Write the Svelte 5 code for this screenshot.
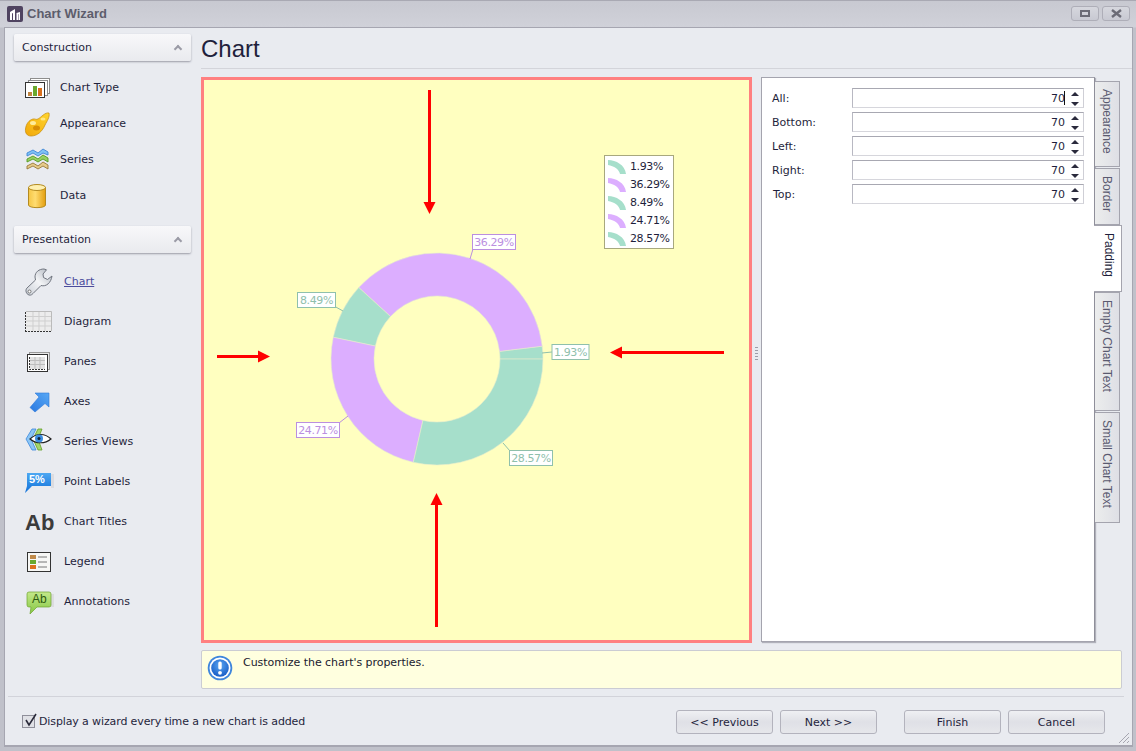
<script>
  const cx = 234, cy = 279, R = 106, r = 63;
  const teal = '#a6dfcb', purple = '#dcaeff';
  const values = [1.93, 36.29, 8.49, 24.71, 28.57];
  const pt = (rad, a) => [cx + rad * Math.cos(a), cy - rad * Math.sin(a)];
  let acc = 0;
  const slices = values.map((v, i) => {
    const a0 = (acc / 100) * 2 * Math.PI;
    acc += v;
    const a1 = (acc / 100) * 2 * Math.PI;
    const [x0, y0] = pt(R, a0), [x1, y1] = pt(R, a1), [x2, y2] = pt(r, a1), [x3, y3] = pt(r, a0);
    const large = a1 - a0 > Math.PI ? 1 : 0;
    return {
      d: `M${x0} ${y0}A${R} ${R} 0 ${large} 0 ${x1} ${y1}L${x2} ${y2}A${r} ${r} 0 ${large} 1 ${x3} ${y3}Z`,
      fill: i % 2 ? purple : teal
    };
  });
  const labels = [
    { t: '1.93%', x: 349, y: 264.5, w: 37, c: '#8fc0ac', l: [339, 273, 349, 272] },
    { t: '36.29%', x: 269.5, y: 154.5, w: 43, c: '#bb8fdf', l: [267, 179, 270, 169] },
    { t: '8.49%', x: 94.5, y: 212.5, w: 38, c: '#8fc0ac', l: [140, 231, 131, 226] },
    { t: '24.71%', x: 93.5, y: 342.5, w: 43, c: '#bb8fdf', l: [145, 336, 136, 343] },
    { t: '28.57%', x: 306.5, y: 370.5, w: 43, c: '#8fc0ac', l: [300, 363, 307, 371] }
  ];
  const legend = [
    ['1.93%', teal], ['36.29%', purple], ['8.49%', teal], ['24.71%', purple], ['28.57%', teal]
  ];
  const construction = [['Chart Type', 'type'], ['Appearance', 'palette'], ['Series', 'series'], ['Data', 'data']];
  const presentation = [
    ['Chart', 'wrench'], ['Diagram', 'diagram'], ['Panes', 'panes'], ['Axes', 'axes'], ['Series Views', 'views'],
    ['Point Labels', 'point'], ['Chart Titles', 'ab'], ['Legend', 'legend'], ['Annotations', 'annot']
  ];
  const props = ['All:', 'Bottom:', 'Left:', 'Right:', 'Top:'];
  const tabs = [
    { t: 'Appearance', h: 86 }, { t: 'Border', h: 57 }, { t: 'Padding', h: 67, active: true },
    { t: 'Empty Chart Text', h: 119 }, { t: 'Small Chart Text', h: 111 }
  ];
</script>

{#snippet icon(n)}
  <svg class="ico" width="32" height="32" viewBox="0 0 32 32" aria-hidden="true">
    {#if n === 'type'}
      <rect x="6.5" y="6.5" width="19" height="15" fill="#fff" stroke="#8d8d8d"/>
      <rect x="4.5" y="8.5" width="19" height="15" fill="#fff" stroke="#8d8d8d"/>
      <rect x="1.5" y="10.5" width="19" height="15" fill="#fff" stroke="#333"/>
      <rect x="4" y="20" width="4" height="4" fill="#c08440"/>
      <rect x="9" y="14" width="4" height="10" fill="#6aa92e"/>
      <rect x="14" y="16" width="4" height="8" fill="#d9701e"/>
    {:else if n === 'palette'}
      <path d="M25 5C26 9 23 13 21 17C18 24 13 28 7 28C3 28 1 25 1.500 21C2 16 5 12 9 11C11 10.500 12 12 14 11C17 9.500 21 4 25 5Z" fill="url(#gold)" stroke="#c58a06" stroke-width=".7"/>
      <ellipse cx="9" cy="15" rx="3" ry="2" fill="#ffec9a"/>
      <ellipse cx="12.500" cy="20" rx="3.500" ry="2.500" fill="#d88d04"/>
      <ellipse cx="19" cy="11" rx="2.500" ry="1.500" fill="#ffe680"/>
    {:else if n === 'series'}
      <path d="M3 9L9 6L14 9L19 5L24 8V11L19 9L14 12L9 9L3 12Z" fill="#7fc2f5" stroke="#3f86d6" stroke-width=".9"/>
      <path d="M3 15L9 12L14 15L19 11L24 14V18L19 15L14 18L9 15L3 18Z" fill="#96d062" stroke="#559a22" stroke-width=".9"/>
      <path d="M3 22L9 19L14 22L19 18L24 21V25L19 22L14 25L9 22L3 25Z" fill="#e6cb8a" stroke="#977838" stroke-width=".9"/>
    {:else if n === 'data'}
      <path d="M4.500 7.500V25C4.500 28.500 21.500 28.500 21.500 25V7.500Z" fill="url(#goldH)" stroke="#b48a20"/>
      <ellipse cx="13" cy="7.500" rx="8.500" ry="3" fill="#fff0b0" stroke="#b48a20"/>
    {:else if n === 'wrench'}
      <path d="M20 3C15 3 11 6 11 11L11.500 14L3 22C1 24 2 28 5 29C7 29.500 8 28.500 9 27.500L17 19.500C22 21 27 17 28 10L23.500 13.500L19.500 11.500L19 8L22.500 3.800Z" fill="url(#steel)" stroke="#70757f" stroke-linejoin="round"/>
      <circle cx="5.500" cy="25.500" r="1.500" fill="#fff" stroke="#777"/>
    {:else if n === 'diagram'}
      <rect x="2" y="6" width="25" height="19" fill="#ececec"/>
      <path d="M2 10.500H27M2 15H27M2 20H27M9 6V25M15 6V25M21 6V25" stroke="#cfcfcf"/>
      <path d="M1.500 6V26M1 25.500H28" stroke="#333" stroke-dasharray="2 1"/>
      <path d="M2 5.500H27.500V25" fill="none" stroke="#bbb"/>
    {:else if n === 'panes'}
      <rect x="5.500" y="6.500" width="20" height="17" fill="#e8e8e8" stroke="#999"/>
      <rect x="3.500" y="8.500" width="20" height="17" fill="#fff" stroke="#333"/>
      <rect x="6" y="11" width="15" height="12" fill="#e2e2e2"/>
      <path d="M6 14.500H21M6 18.500H21M11 11V23M16 11V23" stroke="#bdbdbd"/>
      <path d="M5.500 11V23.500H21" fill="none" stroke="#333" stroke-dasharray="2 1"/>
    {:else if n === 'axes'}
      <path d="M11 7H25V21L21 17.500L11 26L6 21.500L15 11Z" fill="url(#blue)" stroke="#2f78d8" stroke-width=".6"/>
    {:else if n === 'views'}
      <path d="M8 3L2 13L8 24H12L7 13L12 3Z" fill="#8cc6f5" stroke="#3a86dd" stroke-width=".8"/>
      <path d="M14 3L9 13L14 24H18L14 13L18 3Z" fill="#a5d66e" stroke="#5f9f25" stroke-width=".8"/>
      <path d="M6 13C12 7 21 7 27 13C21 18 12 18 6 13Z" fill="#fff" stroke="#222" stroke-width="1.200"/>
      <circle cx="15" cy="12.500" r="4" fill="#3b8de0"/>
      <circle cx="15" cy="12.500" r="1.500" fill="#123"/>
    {:else if n === 'point'}
      <path d="M27 8H30V22H27Z" fill="#dcdce0"/>
      <path d="M3 7H27V20H8L1 27L3 20Z" fill="url(#blue2)"/>
      <text x="5" y="16.500" class="bubble">5%</text>
    {:else if n === 'ab'}
      <text x="1" y="24" class="ab">Ab</text>
    {:else if n === 'legend'}
      <rect x="3.500" y="6.500" width="23" height="19" fill="#f7f7f5" stroke="#333"/>
      <rect x="6" y="9" width="6" height="4" fill="#c08a4a"/>
      <rect x="6" y="14" width="6" height="4" fill="#6aa92e"/>
      <rect x="6" y="19" width="6" height="4" fill="#dd701e"/>
      <path d="M14 11H23M14 16H23M14 21H23" stroke="#777"/>
    {:else if n === 'annot'}
      <path d="M27 8H30V21H27Z" fill="#dcdce0"/>
      <path d="M5 6H25Q27 6 27 8V19Q27 21 25 21H13L6 28L7 21H5Q3 21 3 19V8Q3 6 5 6Z" fill="url(#green)" stroke="#6fa52f" stroke-width=".7"/>
      <text x="8" y="17" class="bubble dark">Ab</text>
    {/if}
  </svg>
{/snippet}

<svg class="defs" width="0" height="0" aria-hidden="true">
  <defs>
    <linearGradient id="gold" x1="0" y1="1" x2="1" y2="0"><stop offset="0" stop-color="#f2a80a"/><stop offset="1" stop-color="#ffd52e"/></linearGradient>
    <linearGradient id="goldH" x1="0" y1="0" x2="1" y2="0"><stop offset="0" stop-color="#f5c645"/><stop offset=".4" stop-color="#ffdc70"/><stop offset="1" stop-color="#e39e10"/></linearGradient>
    <linearGradient id="steel" x1="0" y1="1" x2="1" y2="0"><stop offset="0" stop-color="#c9ced6"/><stop offset=".5" stop-color="#f4f5f7"/><stop offset="1" stop-color="#aab0ba"/></linearGradient>
    <linearGradient id="blue" x1="0" y1="1" x2="1" y2="0"><stop offset="0" stop-color="#2a78e0"/><stop offset="1" stop-color="#58a8f5"/></linearGradient>
    <linearGradient id="blue2" x1="0" y1="0" x2="0" y2="1"><stop offset="0" stop-color="#4ea8f2"/><stop offset="1" stop-color="#0f6fd8"/></linearGradient>
    <linearGradient id="green" x1="0" y1="0" x2="0" y2="1"><stop offset="0" stop-color="#c4e88a"/><stop offset="1" stop-color="#86c744"/></linearGradient>
    <radialGradient id="info" cx=".5" cy=".35" r=".7"><stop offset="0" stop-color="#5aa6f2"/><stop offset="1" stop-color="#1257c2"/></radialGradient>
  </defs>
</svg>

<div class="window">
  <header class="titlebar">
    <svg class="app-ico" width="16" height="16" viewBox="0 0 16 16" aria-hidden="true">
      <rect width="16" height="16" rx="2" fill="#4f4360"/>
      <path d="M3 14V6L8 3V14H6V7L5 7.500V14ZM9.500 14V7L13 6V14H11.500V8L11 8.200V14Z" fill="#fff"/>
    </svg>
    <span class="title">Chart Wizard</span>
    <div class="winbtns">
      <span class="winbtn"><i class="restore"></i></span>
      <span class="winbtn">
        <svg width="11" height="9" viewBox="0 0 11 9" aria-hidden="true"><path d="M1 1L10 8M10 1L1 8" stroke="#6b6b76" stroke-width="2.400"/></svg>
      </span>
    </div>
  </header>

  <div class="frame">
    <div class="main">
      <nav class="nav">
        <div class="group-head"><span>Construction</span><i class="chev"></i></div>
        <ul class="items first">
          {#each construction as [label, n]}
            <li class="item tight">{@render icon(n)}<span>{label}</span></li>
          {/each}
        </ul>
        <div class="group-head"><span>Presentation</span><i class="chev"></i></div>
        <ul class="items">
          {#each presentation as [label, n], i}
            <li class="item wide">{@render icon(n)}<span class:link={i === 0}>{label}</span></li>
          {/each}
        </ul>
      </nav>

      <section class="content">
        <h1>Chart</h1>
        <div class="workspace">
          <div class="chart">
            <svg class="plot" width="545" height="560" viewBox="1 0 545 560" aria-label="Doughnut chart">
              {#each slices as s}
                <path d={s.d} fill={s.fill} stroke="#e6eccd" stroke-width=".6"/>
              {/each}
              {#each labels as l}
                <line x1={l.l[0]} y1={l.l[1]} x2={l.l[2]} y2={l.l[3]} stroke={l.c}/>
                <rect x={l.x} y={l.y} width={l.w} height="15" fill="#fff" stroke={l.c}/>
                <text x={l.x + l.w / 2} y={l.y + 11.500} text-anchor="middle" fill={l.c} class="lbl">{l.t}</text>
              {/each}
              <g stroke="#f00" stroke-width="3" fill="#f00">
                <line x1="226.500" y1="10" x2="226.500" y2="124"/>
                <path d="M220.500 122H232.500L226.500 134Z" stroke="none"/>
                <line x1="14" y1="276.500" x2="55" y2="276.500"/>
                <path d="M55 270.500V282.500L67 276.500Z" stroke="none"/>
                <line x1="521" y1="272.500" x2="418" y2="272.500"/>
                <path d="M419 266.500V278.500L407 272.500Z" stroke="none"/>
                <line x1="233.500" y1="547" x2="233.500" y2="424"/>
                <path d="M227.500 425H239.500L233.500 413Z" stroke="none"/>
              </g>
            </svg>
            <div class="legend">
              {#each legend as [t, c]}
                <div class="legend-row">
                  <svg width="18" height="18" viewBox="0 0 18 18" aria-hidden="true">
                    <path d="M0 2C8 2 17 7 18 16H12C11 11 6 8 0 7Z" fill={c}/>
                  </svg>
                  <span>{t}</span>
                </div>
              {/each}
            </div>
          </div>

          <div class="splitter"><i></i><i></i><i></i><i></i><i></i></div>

          <div class="props">
            {#each props as p, i}
              <div class="prop">
                <label for={'p' + i} class:top={p === 'Top:'}>{p}</label>
                <div class="spin">
                  <input id={'p' + i} value="70" readonly />
                  {#if i === 0}<i class="caret"></i>{/if}
                  <div class="arrows"><i class="up"></i><i class="down"></i></div>
                </div>
              </div>
            {/each}
          </div>

          <div class="tabs">
            {#each tabs as t}
              <div class="tab" class:active={t.active} style:height="{t.h}px"><span>{t.t}</span></div>
            {/each}
          </div>
        </div>

        <div class="info">
          <svg width="26" height="26" viewBox="0 0 26 26" aria-hidden="true">
            <circle cx="13" cy="13" r="12.300" fill="#3f86dc"/>
            <circle cx="13" cy="13" r="10.500" fill="#fff"/>
            <circle cx="13" cy="13" r="8.800" fill="url(#info)"/>
            <rect x="11.300" y="6.500" width="3.400" height="8" rx="1.500" fill="#fff"/>
            <circle cx="13" cy="17.800" r="1.900" fill="#fff"/>
          </svg>
          <p>Customize the chart's properties.</p>
        </div>
      </section>
    </div>

    <footer class="footer">
      <label class="check">
        <span class="box">
          <svg width="15" height="15" viewBox="0 0 15 15" aria-hidden="true"><path d="M3 7L6 12L13 1" fill="none" stroke="#2a2a3a" stroke-width="1.600"/></svg>
        </span>
        Display a wizard every time a new chart is added
      </label>
      <div class="buttons">
        <button>&lt;&lt; Previous</button>
        <button>Next &gt;&gt;</button>
        <button class="gap">Finish</button>
        <button>Cancel</button>
      </div>
      <svg class="grip" width="12" height="12" viewBox="0 0 12 12" aria-hidden="true"><path d="M1 11L11 1M5 11L11 5M9 11L11 9" stroke="#a6a6b0"/></svg>
    </footer>
  </div>
</div>

<style>
  :global(body) { margin: 0; background: #c5c6cf; }
  * { box-sizing: border-box; }
  .defs { position: absolute; }
  .window {
    width: 1136px; height: 751px; display: flex; flex-direction: column; overflow: hidden;
    background: linear-gradient(#c8c9d1, #d0d1d9 26px, #c0c1ca 27px);
    font: 11px "DejaVu Sans", sans-serif; color: #1f1f3c;
    border-top: 1px solid #a9a9b3;
  }
  .titlebar { height: 26px; flex: none; display: flex; align-items: center; padding: 0 6px 0 7px; }
  .app-ico { margin-top: -1px; }
  .title { margin: -1px 0 0 4px; font: bold 13px "Liberation Sans", sans-serif; color: #5d5d6c; }
  .winbtns { margin-left: auto; display: flex; gap: 3px; margin-top: -1px; }
  .winbtn {
    width: 28px; height: 15px; border: 1px solid #aeaeb8; border-radius: 3px;
    background: linear-gradient(#d6d7de, #c8c9d2); display: flex; align-items: center; justify-content: center;
  }
  .restore { width: 10px; height: 7px; border: 2px solid #6b6b76; display: block; }

  .frame {
    flex: 1; min-height: 0; margin: 0 3px 4px 4px; display: flex; flex-direction: column;
    background: #e9ebf0; border: 1px solid #a6a6b1; border-width: 1px 1px 2px;
  }
  .main { display: flex; flex: none; height: 668px; }
  .nav { width: 186px; padding: 6px 0 0 9px; flex: none; }
  .group-head {
    width: 177px; height: 27px; padding: 0 8px 1px; display: flex; align-items: center; justify-content: space-between;
    border-radius: 2px; background: linear-gradient(#f8f8fa, #e9eaee);
    box-shadow: 0 1px 2px rgba(90, 90, 105, .55); font-size: 11px;
  }
  .chev {
    width: 6px; height: 6px; margin: 3px 2px 0 0; transform: rotate(45deg);
    border-left: 2px solid #9b9ba6; border-top: 2px solid #9b9ba6; display: block;
  }
  .items { list-style: none; margin: 9px 0 0; padding: 0; }
  .items.first { margin-bottom: 12px; }
  .item { display: flex; align-items: center; padding-left: 10px; }
  .item span { margin-top: -2px; }
  .item.tight { height: 36px; gap: 4px; }
  .item.wide { height: 40px; gap: 8px; }
  .ico { flex: none; }
  .link { color: #4b4b9c; text-decoration: underline; }
  .bubble { font: bold 11px "Liberation Sans", sans-serif; fill: #fff; }
  .bubble.dark { fill: #2d5a10; font-weight: normal; font-size: 12px; }
  .ab { font: bold 22px "Liberation Sans", sans-serif; fill: #3b3b3b; }

  .content { flex: 1; min-width: 0; padding-left: 10px; }
  h1 {
    margin: 0; height: 41px; padding-top: 5px; font: 24px/32px "Liberation Sans", sans-serif; color: #1f1f3c;
    border-bottom: 1px solid #d3d4da;
  }
  .workspace { display: flex; margin-top: 8px; height: 566px; align-items: flex-start; }
  .chart { width: 551px; height: 566px; border: 3px solid #ff8080; background: #ffffc0; position: relative; flex: none; }
  .plot { display: block; }
  .lbl { font: 11px "DejaVu Sans", sans-serif; letter-spacing: -.4px; }
  .legend {
    position: absolute; left: 400px; top: 75px; width: 70px; height: 94px; background: #fff;
    border: 1px solid #a8a87e; padding: 1px 0 0 3px; color: #1f1f3c; letter-spacing: -.4px;
  }
  .legend-row { height: 18px; display: flex; align-items: center; gap: 4px; }
  .legend-row svg { flex: none; margin-top: 1px; }

  .splitter { width: 9px; height: 566px; flex: none; display: flex; flex-direction: column; align-items: center; justify-content: center; gap: 2px; margin-top: -7px; }
  .splitter i { width: 3px; height: 1px; background: #9c9ca8; display: block; }

  .props {
    width: 334px; height: 565px; flex: none; background: #fff; border: 1px solid #a4a4ae; border-right-color: #8f8f9a;
    box-shadow: 1px 1px 1px rgba(90, 90, 105, .4); padding: 10px 10px 0;
  }
  .prop { display: flex; align-items: center; height: 20px; margin-bottom: 4px; }
  .prop label { width: 80px; flex: none; }
  .prop label.top { padding-left: 1px; }
  .spin {
    flex: 1; height: 20px; position: relative; display: flex; align-items: center;
    border: 1px solid; border-color: #a8a8b2 #cfcfd6 #d6d6dc #b8b8c2;
  }
  .spin input {
    width: 212px; height: 18px; border: 0; outline: 0; padding: 0; text-align: right; background: transparent;
    font: 11px "DejaVu Sans", sans-serif; color: #1f1f3c;
  }
  .caret { position: absolute; left: 211px; top: 2px; width: 1px; height: 14px; background: #111; }
  .arrows { position: absolute; right: 2px; top: 3px; width: 13px; height: 14px; display: flex; flex-direction: column; align-items: center; justify-content: space-between; }
  .arrows i { width: 0; height: 0; border-left: 4px solid transparent; border-right: 4px solid transparent; display: block; }
  .arrows .up { border-bottom: 4px solid #2a2a3c; }
  .arrows .down { border-top: 4px solid #2a2a3c; }

  .tabs { flex: none; margin-top: 4px; width: 28px; display: flex; flex-direction: column; gap: 1px; }
  .tab {
    width: 25px; background: linear-gradient(90deg, #eceded, #dedfe5); border: 1px solid #a4a4ae; border-left: 0;
    display: flex; justify-content: center; padding-top: 7px; color: #5a5a70;
    font: 12px "Liberation Sans", sans-serif;
  }
  .tab.active { width: 28px; background: #fff; color: #1f1f3c; margin: -1px 0 -1px -1px; position: relative; padding-left: 3px; }
  .tab span { writing-mode: vertical-rl; white-space: nowrap; }

  .info {
    margin-top: 7px; height: 39px; width: 921px; background: #ffffdf; border: 1px solid #cbccd3; border-radius: 2px;
    display: flex; align-items: flex-start; padding: 4px 0 0 5px; gap: 10px;
  }
  .info p { margin: 1px 0 0 0; color: #1a1a2e; letter-spacing: -.05px; }

  .footer { flex: 1; margin: 0 8px 0 3px; border-top: 1px solid #d2d3da; position: relative; display: flex; justify-content: space-between; padding: 13px 19px 0 14px; }
  .check { display: flex; align-items: center; height: 24px; gap: 4px; margin-top: -1px; letter-spacing: -.12px; }
  .box { width: 13px; height: 13px; border: 1px solid #8f8f9a; background: #e0e1e6; position: relative; display: block; flex: none; margin-top: 1px; }
  .box svg { position: absolute; left: 0; top: -3px; }
  .buttons { display: flex; gap: 7px; }
  button {
    width: 97px; height: 24px; border: 1px solid #b3b3bd; border-radius: 3px; padding: 0;
    background: linear-gradient(#eff0f3, #dfe0e6 50%, #e6e7eb); font: 11px "DejaVu Sans", sans-serif; color: #1f1f3c;
  }
  button.gap { margin-left: 20px; }
  .grip { position: absolute; right: -6px; bottom: 1px; }
</style>
